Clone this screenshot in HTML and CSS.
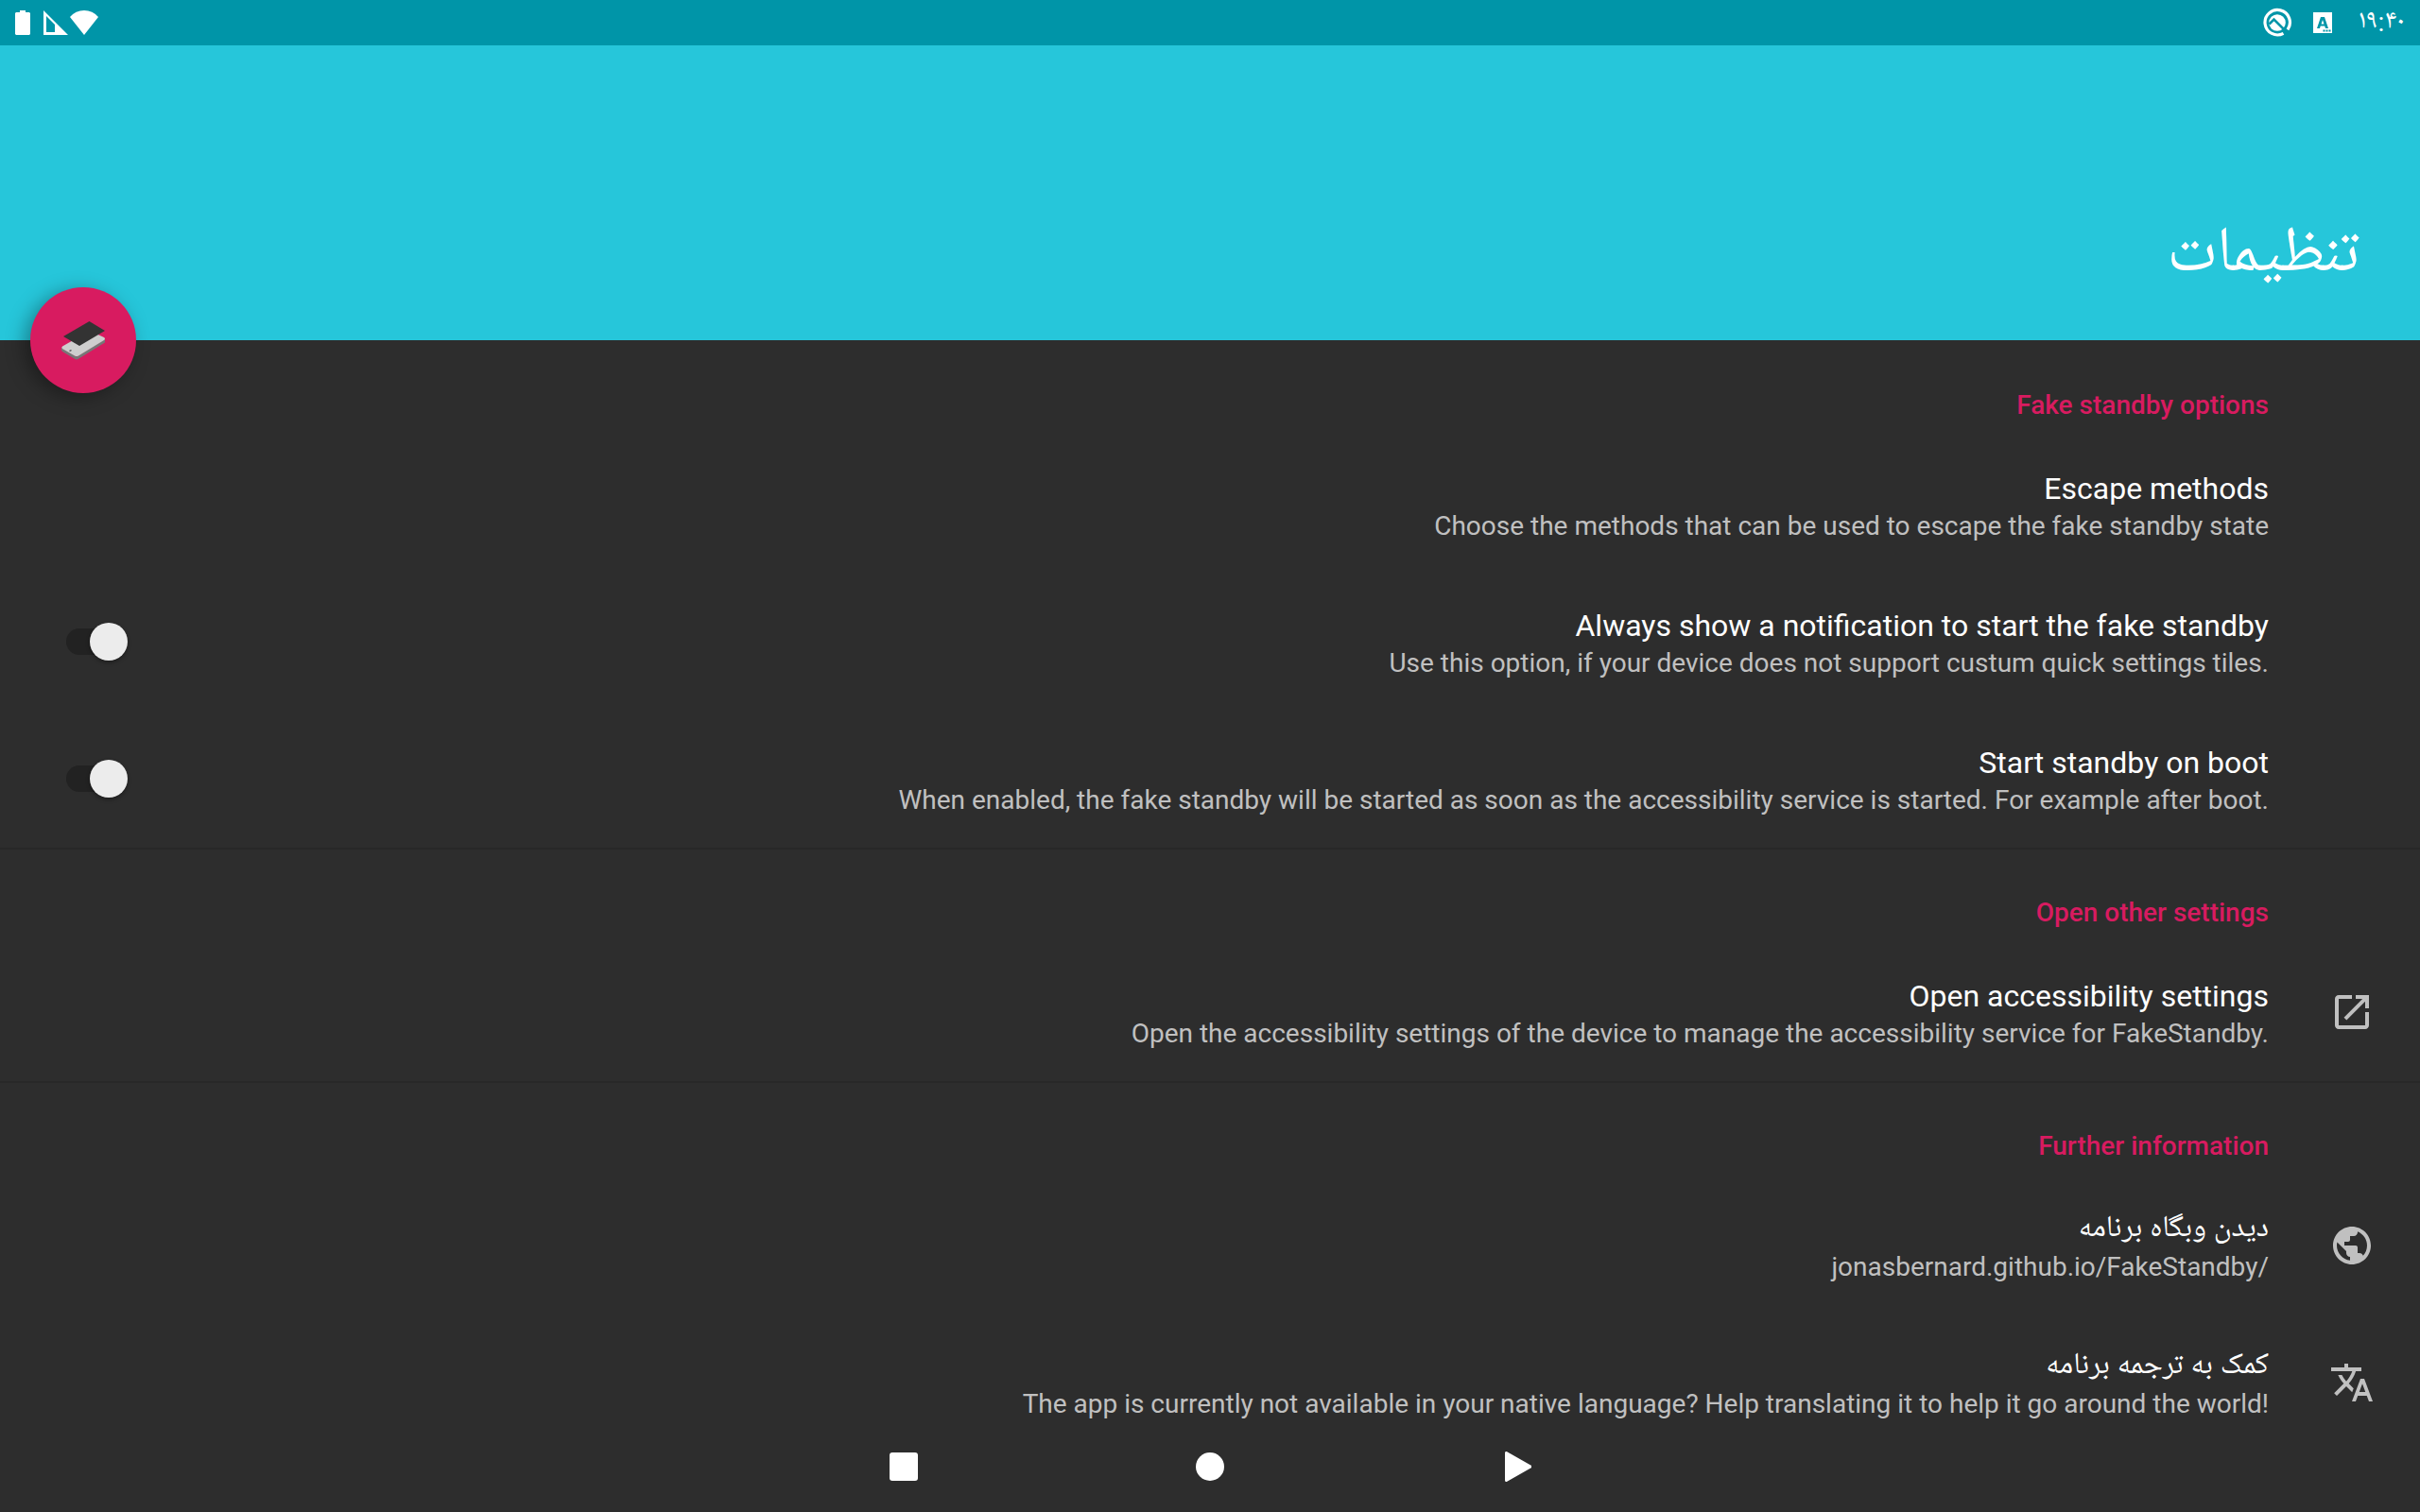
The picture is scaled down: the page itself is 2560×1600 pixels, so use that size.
FILE: index.html
```html
<!DOCTYPE html>
<html lang="fa" dir="rtl">
<head>
<meta charset="utf-8">
<meta name="viewport" content="width=device-width, initial-scale=1">
<title>تنظیمات</title>
<link rel="stylesheet" href="styles.css">
</head>
<body>
<div class="status-bar">
  <div class="status-group status-start">
    <time class="clock">۱۹:۴۰</time>
    <svg class="status-badge" viewBox="0 0 20 22" aria-hidden="true"><path fill="#fff" d="M0 0h20v22H0z"/><path fill="#0095a8" fill-rule="evenodd" d="M8 5h4l4 12h-3l-.8-2.500H7.700L7 17H4zM10 8l-1.500 4.500h3zM10.500 18.500h2v2h-2zM13.500 18.500h2v2h-2zM16.500 18.500h2v2h-2z"/></svg>
    <svg class="status-ring" viewBox="0 0 32 32" aria-hidden="true"><path d="M22.500 27.300A13.200 13.200 0 1 1 27 23.300" fill="none" stroke="#fff" stroke-width="3.200"/><circle cx="16" cy="16" r="8.800" fill="#fff"/><path d="M7.500 17.500l5-5L27 27" fill="none" stroke="#0095a8" stroke-width="2.600"/></svg>
  </div>
  <div class="status-group status-end">
    <svg class="wifi" viewBox="0 0 30 26" aria-hidden="true"><path fill="#fff" d="M0 7Q6 0 15 0t15 7L15 26z"/></svg>
    <svg class="signal" viewBox="0 0 26 26" aria-hidden="true"><path fill="#fff" fill-rule="evenodd" d="M0 0l26 26H0zM3 6v17h9v-8z"/></svg>
    <svg class="battery" viewBox="0 0 16 26" aria-hidden="true"><path fill="#fff" d="M5 0h6v2h4l1 1v22l-1 1H1l-1-1V3l1-1h4z"/></svg>
  </div>
</div>

<header class="app-bar">
  <h1 class="app-title">تنظیمات</h1>
  <button class="fab" type="button" aria-label="Fake standby">
    <svg class="fab-icon" viewBox="0 0 48 42" aria-hidden="true">
      <path fill="#777" d="M1 29l16 9.500L47 20v3.500L18.500 41q-1.500.8-3 0L2 33q-1-.8-1-2z"/>
      <path fill="#cecece" d="M2 27.500L31 11l15 7q2 1.500 0 3L19 37.500q-2 1-4 0L2 30q-1.500-1.300 0-2.500z"/>
      <path fill="#333" d="M3 17L30.500 1 47 11 20 27z"/>
      <path fill="#555" d="M9 32l2-1 1 1-2 1z"/>
    </svg>
  </button>
</header>

<main>
  <section class="section">
    <h2 class="section-title" dir="ltr">Fake standby options</h2>
    <button class="row" type="button">
      <span class="row-icon"></span>
      <span class="row-text"><span class="row-title" dir="ltr">Escape methods</span><span class="row-summary" dir="ltr">Choose the methods that can be used to escape the fake standby state</span></span>
    </button>
    <label class="row">
      <span class="row-icon"></span>
      <span class="row-text"><span class="row-title" dir="ltr">Always show a notification to start the fake standby</span><span class="row-summary" dir="ltr">Use this option, if your device does not support custum quick settings tiles.</span></span>
      <input class="switch" type="checkbox" role="switch">
    </label>
    <label class="row">
      <span class="row-icon"></span>
      <span class="row-text"><span class="row-title" dir="ltr">Start standby on boot</span><span class="row-summary" dir="ltr">When enabled, the fake standby will be started as soon as the accessibility service is started. For example after boot.</span></span>
      <input class="switch" type="checkbox" role="switch">
    </label>
  </section>

  <section class="section">
    <h2 class="section-title" dir="ltr">Open other settings</h2>
    <button class="row" type="button">
      <span class="row-icon"><svg class="icon" viewBox="0 0 24 24" aria-hidden="true"><path d="M19 19H5V5h7V3H5c-1.110 0-2 .9-2 2v14c0 1.100.89 2 2 2h14c1.100 0 2-.9 2-2v-7h-2v7zM14 3v2h3.590l-9.830 9.830 1.410 1.410L19 6.410V10h2V3h-7z"/></svg></span>
      <span class="row-text"><span class="row-title" dir="ltr">Open accessibility settings</span><span class="row-summary" dir="ltr">Open the accessibility settings of the device to manage the accessibility service for FakeStandby.</span></span>
    </button>
  </section>

  <section class="section">
    <h2 class="section-title" dir="ltr">Further information</h2>
    <a class="row" href="https://jonasbernard.github.io/FakeStandby/">
      <span class="row-icon"><svg class="icon" viewBox="0 0 24 24" aria-hidden="true"><path d="M12 2C6.480 2 2 6.480 2 12s4.480 10 10 10 10-4.480 10-10S17.520 2 12 2zm-1 17.930c-3.950-.49-7-3.850-7-7.930 0-.62.080-1.210.21-1.790L9 15v1c0 1.100.9 2 2 2v1.930zm6.900-2.540c-.26-.81-1-1.390-1.900-1.390h-1v-3c0-.55-.45-1-1-1H8v-2h2c.55 0 1-.45 1-1V7h2c1.100 0 2-.9 2-2v-.41c2.930 1.190 5 4.060 5 7.410 0 2.080-.8 3.970-2.100 5.390z"/></svg></span>
      <span class="row-text"><span class="row-title">دیدن وبگاه برنامه</span><span class="row-summary" dir="ltr">jonasbernard.github.io/FakeStandby/</span></span>
    </a>
    <a class="row" href="#translate">
      <span class="row-icon"><svg class="icon" viewBox="0 0 24 24" aria-hidden="true"><path d="M12.870 15.070l-2.540-2.510.030-.030c1.740-1.940 2.980-4.170 3.710-6.530H17V4h-7V2H8v2H1v1.990h11.170C11.500 7.920 10.440 9.750 9 11.350 8.070 10.320 7.300 9.190 6.690 8h-2c.73 1.630 1.730 3.170 2.980 4.560l-5.090 5.020L4 19l5-5 3.110 3.110.76-2.040zM18.500 10h-2L12 22h2l1.120-3h4.750L21 22h2l-4.500-12zm-2.620 7l1.620-4.330L19.120 17h-3.240z"/></svg></span>
      <span class="row-text"><span class="row-title">کمک به ترجمه برنامه</span><span class="row-summary" dir="ltr">The app is currently not available in your native language? Help translating it to help it go around the world!</span></span>
    </a>
  </section>
</main>

<nav class="nav-bar">
  <button class="nav-button" type="button" aria-label="Back"><svg class="nav-icon" viewBox="0 0 32 32" aria-hidden="true"><path d="M5.500 1.500v29L31 16z" stroke="#fff" stroke-width="3" stroke-linejoin="round"/></svg></button>
  <button class="nav-button" type="button" aria-label="Home"><svg class="nav-icon" viewBox="0 0 32 32" aria-hidden="true"><circle cx="16" cy="16" r="15"/></svg></button>
  <button class="nav-button" type="button" aria-label="Recent apps"><svg class="nav-icon" viewBox="0 0 32 32" aria-hidden="true"><rect x="1" y="1" width="30" height="30" rx="3"/></svg></button>
</nav>
</body>
</html>
```
FILE: styles.css
```css
* {
  box-sizing: border-box;
}

body {
  margin: 0;
  min-height: 100vh;
  background: #2d2d2d;
  color: #fff;
  font-family: Roboto, "Noto Naskh Arabic UI", "Noto Naskh Arabic", "DejaVu Sans", sans-serif;
  font-size: 28px;
}

button {
  border: 0;
  background: none;
  color: inherit;
  font: inherit;
}

.status-bar {
  display: flex;
  justify-content: space-between;
  height: 48px;
  padding: 0 16px;
  background: #0095a8;
}

.status-group {
  display: flex;
  align-items: center;
}

.clock {
  font-size: 28px;
  line-height: 48px;
  margin-left: 28px;
}

.status-badge {
  width: 20px;
  height: 22px;
  margin-left: 22px;
}

.status-ring {
  width: 32px;
  height: 32px;
}

.wifi {
  width: 30px;
  height: 26px;
  margin-left: 2px;
}

.signal {
  width: 26px;
  height: 26px;
  margin-left: 14px;
}

.battery {
  width: 16px;
  height: 26px;
}

.app-bar {
  position: relative;
  display: flex;
  align-items: flex-end;
  height: 312px;
  padding: 0 64px 50px;
  background: #26c6da;
}

.app-title {
  margin: 0;
  font-size: 68px;
  font-weight: 400;
  line-height: 76px;
}

.fab {
  position: absolute;
  left: 32px;
  bottom: -56px;
  display: grid;
  place-items: center;
  width: 112px;
  height: 112px;
  padding: 0;
  border-radius: 50%;
  background: #d81b60;
  box-shadow: -6px 4px 20px rgba(0, 0, 0, 0.35);
}

.fab-icon {
  width: 48px;
  height: 42px;
}

.section {
  padding-bottom: 1px;
}

.section + .section {
  box-shadow: inset 0 2px #282828;
}

.section-title {
  height: 101px;
  margin: 0;
  padding: 53px 160px 0 0;
  color: #d81b60;
  font-size: 28px;
  font-weight: 500;
  line-height: 32px;
  text-align: right;
}

.row {
  display: flex;
  align-items: center;
  width: 100%;
  height: 145px;
  padding: 0 48px 0 70px;
  color: inherit;
  text-align: right;
  text-decoration: none;
}

.row-icon {
  display: flex;
  flex: none;
  width: 112px;
}

.icon {
  width: 48px;
  height: 48px;
  fill: #c0c0c0;
}

.row-text {
  display: flex;
  flex: 1;
  flex-direction: column;
  padding-top: 4px;
}

.row-title {
  font-size: 32px;
  line-height: 42px;
}

.row-summary {
  color: #c0c0c0;
  line-height: 38px;
}

.switch {
  display: flex;
  align-items: center;
  appearance: none;
  width: 65px;
  height: 28px;
  margin: 0;
  border-radius: 14px;
  background: #222;
}

.switch::before {
  content: "";
  flex: none;
  width: 40px;
  height: 40px;
  border-radius: 50%;
  background: #ececec;
  box-shadow: 0 2px 4px rgba(0, 0, 0, 0.35);
}

.nav-bar {
  position: fixed;
  inset: auto 0 0;
  display: flex;
  justify-content: center;
  gap: 164px;
  height: 96px;
}

.nav-button {
  display: grid;
  place-items: center;
  width: 160px;
  height: 96px;
  padding: 0;
}

.nav-icon {
  width: 32px;
  height: 32px;
  fill: #fff;
}
```
